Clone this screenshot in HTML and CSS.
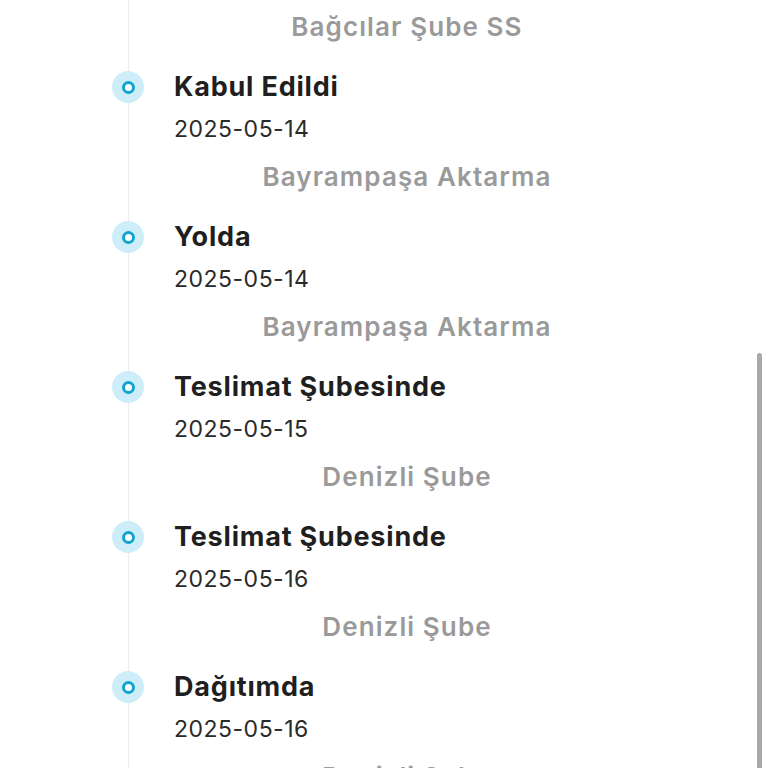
FILE: index.html
```html
<!DOCTYPE html>
<html>
<head>
  <meta charset="utf-8">
  <link rel="stylesheet" href="styles.css">
</head>
<body>
  <div class="timeline">
    <div class="location lead">Bağcılar Şube SS</div>

    <div class="item">
      <div class="dot"></div>
      <div class="title">Kabul Edildi</div>
      <div class="date">2025-05-14</div>
      <div class="location">Bayrampaşa Aktarma</div>
    </div>

    <div class="item">
      <div class="dot"></div>
      <div class="title">Yolda</div>
      <div class="date">2025-05-14</div>
      <div class="location">Bayrampaşa Aktarma</div>
    </div>

    <div class="item">
      <div class="dot"></div>
      <div class="title">Teslimat Şubesinde</div>
      <div class="date">2025-05-15</div>
      <div class="location">Denizli Şube</div>
    </div>

    <div class="item">
      <div class="dot"></div>
      <div class="title">Teslimat Şubesinde</div>
      <div class="date">2025-05-16</div>
      <div class="location">Denizli Şube</div>
    </div>

    <div class="item">
      <div class="dot"></div>
      <div class="title">Dağıtımda</div>
      <div class="date">2025-05-16</div>
      <div class="location">Denizli Şube</div>
    </div>
  </div>

  <div class="scroll-thumb"></div>
</body>
</html>
```

FILE: styles.css
```css
* {
  margin: 0;
  padding: 0;
  box-sizing: border-box;
}

body {
  width: 768px;
  height: 768px;
  overflow: hidden;
  background: #fff;
  font-family: Inter, 'Open Sans', sans-serif;
  position: relative;
}

.timeline {
  margin-left: 128px;
  width: 512px;
  padding-top: 1px;
  border-left: 1.5px solid #ececec;
  min-height: 768px;
}

.item {
  position: relative;
  padding-left: 45px;
  margin-top: 14px;
}

.lead {
  padding-left: 45px;
}

.dot {
  position: absolute;
  left: -17px;
  top: 4px;
  width: 32px;
  height: 32px;
  border-radius: 50%;
  background: #cdeef9;
  display: flex;
  align-items: center;
  justify-content: center;
}

.dot::after {
  content: "";
  width: 7px;
  height: 7px;
  border-radius: 50%;
  background: #fff;
  border: 3.5px solid #12a4d1;
}

.title {
  font-size: 27px;
  font-weight: 700;
  letter-spacing: 0.8px;
  line-height: 40px;
  color: #1f1f1f;
}

.date {
  font-size: 23px;
  font-weight: 400;
  letter-spacing: 0.5px;
  line-height: 44px;
  color: #2a2a2a;
}

.location {
  font-size: 26px;
  font-weight: 600;
  letter-spacing: 1.1px;
  line-height: 52px;
  color: #9a9a9a;
  text-align: center;
}

.scroll-thumb {
  position: absolute;
  right: 6px;
  top: 353px;
  width: 5px;
  height: 420px;
  border-radius: 3px 3px 0 0;
  background: #a9a9a9;
}
```
